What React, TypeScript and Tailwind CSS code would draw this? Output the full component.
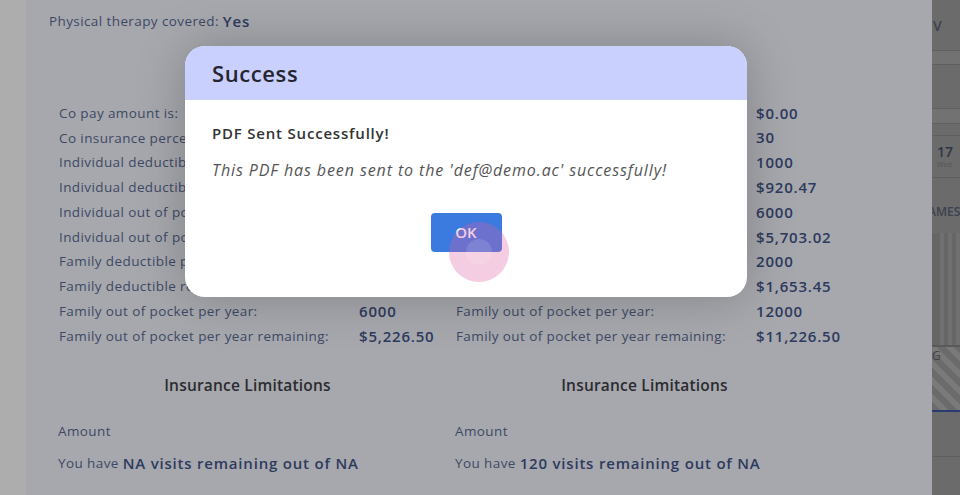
import React from "react";

const left: [string, string][] = [
  ["Co pay amount is:", "$0.00"],
  ["Co insurance percentage:", "20"],
  ["Individual deductible per year:", "1000"],
  ["Individual deductible remaining:", "$920.47"],
  ["Individual out of pocket per year:", "3000"],
  ["Individual out of pocket remaining:", "$2,851.51"],
  ["Family deductible per year:", "2000"],
  ["Family deductible remaining:", "$1,653.45"],
  ["Family out of pocket per year:", "6000"],
  ["Family out of pocket per year remaining:", "$5,226.50"],
];

const right: [string, string][] = [
  ["Co pay amount is:", "$0.00"],
  ["Co insurance percentage:", "30"],
  ["Individual deductible per year:", "1000"],
  ["Individual deductible remaining:", "$920.47"],
  ["Individual out of pocket per year:", "6000"],
  ["Individual out of pocket per year remaining:", "$5,703.02"],
  ["Family deductible per year:", "2000"],
  ["Family deductible remaining:", "$1,653.45"],
  ["Family out of pocket per year:", "12000"],
  ["Family out of pocket per year remaining:", "$11,226.50"],
];

const label = "text-[13.5px] tracking-[0.4px] text-[#3f4865] whitespace-nowrap";
const value = "text-[15px] tracking-[0.8px] font-semibold text-[#2e3a5e] whitespace-nowrap";

function Column({ rows, visits }: { rows: [string, string][]; visits: string }) {
  return (
    <div className="flex flex-col">
      <div className="h-[39.6px]" />
      <div className="flex flex-col pl-[10px]">
        {rows.map(([l, v]) => (
          <div key={l} className="h-[24.78px] flex items-center">
            <div className={`w-[300px] shrink-0 ${label}`}>{l}</div>
            <div className={value}>{v}</div>
          </div>
        ))}
      </div>
      <div className="mt-[24.6px] h-[26px] flex items-center justify-center text-[15.5px] tracking-[0.2px] font-semibold text-[#2b2c30]">
        Insurance Limitations
      </div>
      <div className={`mt-[22px] pl-[9px] leading-[20px] ${label}`}>Amount</div>
      <div className="mt-[11px] pl-[9px] h-[22px] flex items-center whitespace-nowrap">
        <span className={label}>You have&nbsp;</span>
        <span className={value}>{visits}</span>
      </div>
    </div>
  );
}

export default function App() {
  return (
    <div
      className="relative w-[960px] h-[495px] overflow-hidden flex bg-[#adadad]"
      style={{ fontFamily: '"Open Sans", "Noto Sans", sans-serif' }}
    >
      <div className="w-[26px] shrink-0" />
      <main className="w-[906px] shrink-0 bg-[#a6a8ad] pl-[23px] pt-[11px]">
        <div className="h-[20px] flex items-center whitespace-nowrap">
          <span className={label}>Physical therapy covered:&nbsp;</span>
          <span className={value}>Yes</span>
        </div>
        <div className="mt-[30px] grid grid-cols-[397px_397px]">
          <Column rows={left} visits="NA visits remaining out of NA" />
          <Column rows={right} visits="120 visits remaining out of NA" />
        </div>
      </main>
      <aside className="w-[28px] shrink-0 bg-[#6b6b6b] flex flex-col overflow-hidden">
        <div className="h-[50px] flex items-center pl-[1px] text-[14px] font-semibold text-[#3c4250]">V</div>
        <div className="h-[15px] bg-[#727272] border-y border-[#5f5f5f]" />
        <div className="h-[43px]" />
        <div className="h-[16px] bg-[#727272] border-y border-[#5f5f5f]" />
        <div className="h-[11px]" />
        <div className="h-[43px] border-y border-[#5f5f5f] flex flex-col items-start pl-[5px] justify-center">
          <span className="text-[14px] font-semibold text-[#2e3547] leading-[16px]">17</span>
          <span className="text-[7px] text-[#555] leading-[10px]">Wed</span>
        </div>
        <div className="h-[12px]" />
        <div className="h-[43px] flex items-center text-[12px] font-semibold text-[#3c4250] -ml-[4px] overflow-hidden">AMES</div>
        <div className="h-[112px] flex gap-[4px] pl-[8px] bg-[#666]">
          <div className="w-[4px] bg-[#707070]" />
          <div className="w-[4px] bg-[#707070]" />
          <div className="w-[4px] bg-[#707070]" />
        </div>
        <div
          className="h-[67px] border-t-2 border-[#5a5a5a] border-b-2 border-b-[#2b3a70] text-[12px] text-[#444]"
          style={{ backgroundImage: "repeating-linear-gradient(45deg, #6b6b6b 0 6px, #7a7a7a 6px 12px)" }}
        >
          G
        </div>
        <div className="h-[45px] border-b border-[#5f5f5f]" />
      </aside>

      <div className="absolute left-[185px] top-[46px] w-[562px] h-[251px] rounded-[20px] bg-white overflow-hidden shadow-[0_0_50px_rgba(0,0,0,0.22)] flex flex-col">
        <div className="h-[54px] shrink-0 bg-[#c9d0fd] flex items-center pl-[27px] text-[22px] tracking-[0.6px] font-semibold text-[#24252e]">
          Success
        </div>
        <div className="pl-[27px] pt-[22px] leading-[22px] text-[15px] tracking-[0.8px] font-semibold text-[#333]">PDF Sent Successfully!</div>
        <div className="pl-[27px] pt-[14px] leading-[24px] text-[16px] tracking-[0.9px] italic text-[#555] whitespace-nowrap">
          This PDF has been sent to the 'def@demo.ac' successfully!
        </div>
        <div className="flex justify-center pt-[31px]">
          <div className="relative w-[71px] h-[39px] rounded-[4px] bg-[#3b7be0] flex items-center justify-center text-[15px] font-semibold text-white">
            OK
          </div>
        </div>
        <div className="absolute left-[264px] top-[176px] w-[60px] h-[60px] rounded-full bg-[rgba(220,90,160,0.3)]" />
        <div className="absolute left-[281px] top-[193px] w-[26px] h-[26px] rounded-full bg-[rgba(255,255,255,0.12)]" />
      </div>
    </div>
  );
}
